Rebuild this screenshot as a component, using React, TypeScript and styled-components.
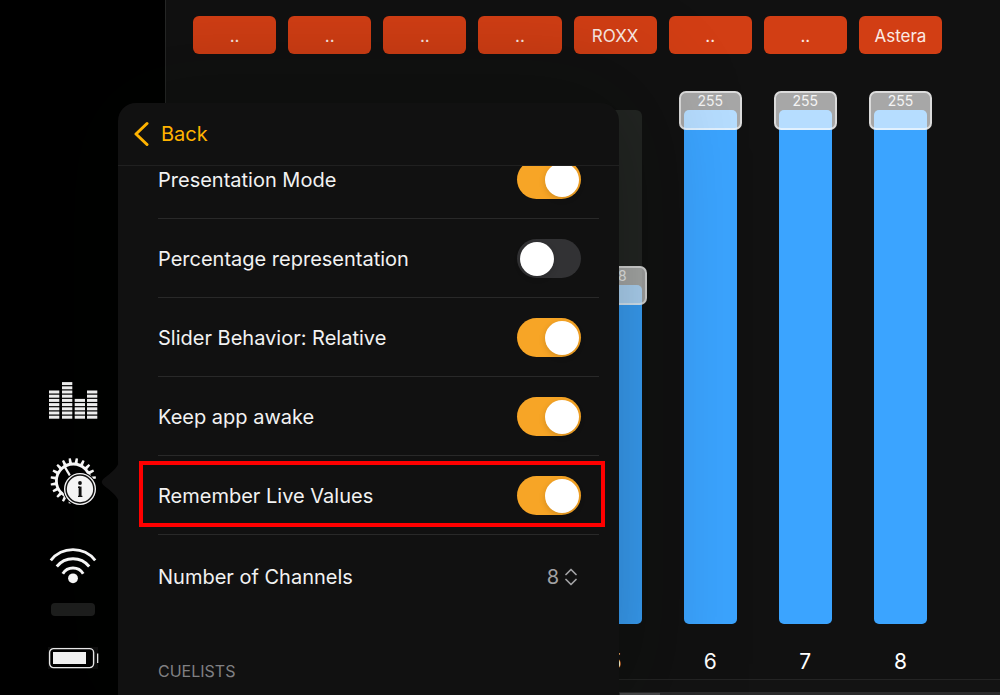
import React, { useState } from 'react';
import styled, { createGlobalStyle } from 'styled-components';

const GlobalStyle = createGlobalStyle`
  *, *::before, *::after { box-sizing: border-box; }
  body {
    margin: 0;
    background: #000;
    color: #f2f2f2;
    font-family: Inter, "Liberation Sans", sans-serif;
  }
  button { font: inherit; color: inherit; border: 0; cursor: pointer; }
`;

const Screen = styled.div`
  position: relative;
  display: flex;
  height: 100vh;
  overflow: hidden;
`;

const Sidebar = styled.nav`
  position: relative;
  z-index: 1;
  flex: 0 0 117px;
  display: flex;
  flex-direction: column;
  justify-content: flex-end;
  margin-right: 48px;
  padding: 0 0 26px 48px;
`;

const NavButton = styled.button<{ $space: number }>`
  width: 51px;
  padding: 0;
  margin-bottom: ${(p) => p.$space}px;
  background: none;
  line-height: 0;
`;

const StatusPill = styled.div`
  width: 44px;
  height: 13px;
  margin: 0 0 31px 3px;
  border-radius: 4px;
  background: #1c1d1c;
`;

const Console = styled.main`
  flex: 1;
  display: flex;
  flex-direction: column;
  min-width: 0;
  border-left: 1px solid #262726;
  background: #111;
`;

const Grid = styled.div`
  display: grid;
  grid-template-columns: repeat(8, 1fr);
  column-gap: 12px;
  padding: 0 58px 0 27px;
`;

const ButtonGrid = styled(Grid)`
  padding-top: 16px;
`;

const FaderGrid = styled(Grid)`
  flex: 1;
  padding-top: 56px;
`;

const CueButton = styled.button`
  height: 38px;
  padding: 1px 0 0;
  border-radius: 6px;
  background: #d23e14;
  color: #fbeae4;
  font-size: 17px;
  line-height: 36px;
`;

const Channel = styled.div`
  display: flex;
  flex-direction: column;
  align-items: center;
`;

const Track = styled.div`
  position: relative;
  flex: 1;
  width: 53px;
  border-radius: 6px;
  background: #242624;
`;

const Fill = styled.div`
  position: absolute;
  inset: auto 0 0;
  border-radius: 5px;
  background: #3ba4ff;
`;

const Thumb = styled.div`
  position: absolute;
  top: -19px;
  left: -5px;
  right: -5px;
  height: 39px;
  border: 2px solid rgba(255, 255, 255, 0.6);
  border-radius: 7px;
  background: rgba(255, 255, 255, 0.63);
  color: #f4f4f4;
  font-size: 14px;
  line-height: 16px;
  text-align: center;
`;

const ChannelName = styled.div`
  height: 55px;
  padding-top: 26px;
  color: #fff;
  font-size: 21px;
  line-height: 24px;
`;

const BottomBar = styled.div`
  height: 16px;
  padding-top: 12px;
  border-top: 1px solid #242424;
  background: #131313;
`;

const BottomStrip = styled.div`
  height: 3px;
  padding: 1px 0 0 454px;
  background: #2a2a2b;
`;

const BottomTab = styled.div`
  width: 40px;
  height: 2px;
  background: #4a4a4c;
`;

const Popover = styled.section`
  position: absolute;
  top: 103px;
  bottom: 0;
  left: 118px;
  display: flex;
  flex-direction: column;
  width: 501px;
  border-radius: 18px 18px 0 0;
  background: #111;
  box-shadow: 0 0 110px 20px rgba(0, 10, 0, 0.28);
`;

const Arrow = styled.svg`
  position: absolute;
  top: 358px;
  left: -17px;
`;

const PopoverHeader = styled.header`
  display: flex;
  flex: 0 0 63px;
  align-items: center;
  padding-left: 16px;
  border-bottom: 1px solid #202020;
`;

const BackButton = styled.button`
  display: flex;
  align-items: center;
  gap: 12px;
  padding: 0;
  background: none;
  color: #ffb300;
  font-size: 20px;
  line-height: 24px;
`;

const ScrollArea = styled.div`
  flex: 1;
  min-height: 0;
  overflow: hidden;
  padding: 0 20px 0 40px;
`;

const List = styled.div`
  margin-top: -26px;
`;

const Row = styled.div`
  position: relative;
  display: flex;
  align-items: center;
  justify-content: space-between;
  height: 79px;
  padding-right: 18px;
  border-bottom: 1px solid #292929;
  font-size: 20px;
  line-height: 24px;
`;

const PickerRow = styled(Row)`
  height: 83px;
  border-bottom: 0;
`;

const OptionLabel = styled.label`
  padding-top: 2px;
`;

const Highlight = styled.span`
  position: absolute;
  inset: 5px -6px 7px -19px;
  border: 4px solid #f00;
  pointer-events: none;
`;

const Switch = styled.input`
  appearance: none;
  width: 64px;
  height: 39px;
  margin: 0;
  padding: 3px 2px 2px 3px;
  border-radius: 20px;
  background: #323234;
  cursor: pointer;

  &::before {
    content: '';
    display: block;
    width: 34px;
    height: 34px;
    border-radius: 50%;
    background: #fff;
    box-shadow: 0 2px 6px rgba(0, 0, 0, 0.15);
  }

  &:checked { background: #f7a526; }
  &:checked::before { margin-left: auto; }
`;

const PickerButton = styled.button`
  display: flex;
  align-items: center;
  gap: 6px;
  padding: 0 4px 0 0;
  background: none;
  color: #a2a2a4;
  font-size: 20px;
  line-height: 24px;
`;

const SectionTitle = styled.h2`
  margin: 43px 0 0;
  color: #808083;
  font-size: 16px;
  font-weight: 400;
  line-height: 20px;
`;

const MixerIcon = () => {
  const bars = [
    { x: 1, n: 7 },
    { x: 14, n: 9 },
    { x: 26.7, n: 5 },
    { x: 39, n: 7 },
  ];
  return (
    <svg width="51" height="38" viewBox="0 0 51 38" aria-hidden="true">
      {bars.map((b) =>
        Array.from({ length: b.n }, (_, i) => (
          <rect key={`${b.x}-${i}`} x={b.x} y={34.7 - i * 4.2} width="10.3" height="3" fill="#ededed" />
        ))
      )}
    </svg>
  );
};

const GearIcon = () => (
  <svg width="51" height="50" viewBox="0 0 51 50" fill="none" aria-hidden="true">
    <circle cx="25.3" cy="23.9" r="16.9" stroke="#f6f6f6" strokeWidth="2.8" />
    {Array.from({ length: 20 }, (_, i) => (
      <path key={i} d="M23.700 6.800L24.200 1.100h2.200L26.900 6.800z" fill="#f6f6f6" transform={`rotate(${i * 18 + 9} 25.3 23.9)`} />
    ))}
    <path d="M16.500 9.500l7.500 12.500" stroke="#f6f6f6" strokeWidth="2.4" />
    <circle cx="32" cy="32" r="17" fill="#000" />
    <circle cx="32" cy="32" r="16" fill="#f4f4f4" />
    <circle cx="32" cy="32" r="13.9" stroke="#111" strokeWidth="1.5" />
    <circle cx="32" cy="26" r="1.9" fill="#111" />
    <path d="M30 30.300h2" stroke="#111" strokeWidth="1.400" />
    <path d="M30 39.400h4.400" stroke="#111" strokeWidth="1.200" />
    <path d="M32.100 29.600v10.400" stroke="#111" strokeWidth="2.900" />
  </svg>
);

const WifiIcon = () => (
  <svg width="51" height="38" viewBox="0 0 51 38" fill="none" stroke="#f5f5f5" strokeWidth="2.9" aria-hidden="true">
    <path d="M2.800 13.300A28.500 28.500 0 0 1 47.200 13.300" />
    <path d="M8.800 19.500A20.800 20.800 0 0 1 41.200 19.500" />
    <path d="M14.800 26.800A11.900 11.900 0 0 1 35.200 26.800" />
    <circle cx="25" cy="31.300" r="4.900" fill="#f5f5f5" stroke="none" />
  </svg>
);

const BatteryIcon = () => (
  <svg width="51" height="22" viewBox="0 0 51 22" aria-hidden="true">
    <rect x="0" y="0" width="50" height="22" fill="#0d0d0d" />
    <rect x="1.600" y="1.600" width="44" height="19" rx="4" fill="#000" stroke="#e6e6e6" strokeWidth="1.400" />
    <rect x="5" y="5" width="33" height="12" fill="#f0f0f0" />
    <rect x="49" y="6.500" width="1.300" height="9.500" fill="#e6e6e6" />
  </svg>
);

const cueNames = ['..', '..', '..', '..', 'ROXX', '..', '..', 'Astera'];

// Channels whose column lies fully under the popover carry no readout.
const channels = [
  { number: 1, covered: true, value: 0 },
  { number: 2, covered: true, value: 0 },
  { number: 3, covered: true, value: 0 },
  { number: 4, covered: true, value: 0 },
  { number: 5, value: 168 },
  { number: 6, value: 255 },
  { number: 7, value: 255 },
  { number: 8, value: 255 },
];

const options = [
  { label: 'Presentation Mode', on: true },
  { label: 'Percentage representation', on: false },
  { label: 'Slider Behavior: Relative', on: true },
  { label: 'Keep app awake', on: true },
  { label: 'Remember Live Values', on: true, marked: true },
];

function Option({ label, on, marked }: { label: string; on: boolean; marked?: boolean }) {
  const [checked, setChecked] = useState(on);
  const id = label.toLowerCase().replace(/\W+/g, '-');
  return (
    <Row>
      <OptionLabel htmlFor={id}>{label}</OptionLabel>
      <Switch id={id} type="checkbox" role="switch" checked={checked} onChange={() => setChecked(!checked)} />
      {marked && <Highlight />}
    </Row>
  );
}

export default function App() {
  return (
    <Screen>
      <GlobalStyle />
      <Sidebar>
        <NavButton $space={38} aria-label="Mixer"><MixerIcon /></NavButton>
        <NavButton $space={40} aria-label="Settings"><GearIcon /></NavButton>
        <NavButton $space={18} aria-label="Network"><WifiIcon /></NavButton>
        <StatusPill />
        <BatteryIcon />
      </Sidebar>

      <Console>
        <ButtonGrid>
          {cueNames.map((name, i) => <CueButton key={i}>{name}</CueButton>)}
        </ButtonGrid>
        <FaderGrid>
          {channels.map(({ number, value, covered }) => (
            <Channel key={number}>
              <Track>
                {!covered && (
                  <Fill style={{ height: `${(value / 255) * 100}%` }}>
                    <Thumb>{value}</Thumb>
                  </Fill>
                )}
              </Track>
              <ChannelName>{!covered && number}</ChannelName>
            </Channel>
          ))}
        </FaderGrid>
        <BottomBar>
          <BottomStrip><BottomTab /></BottomStrip>
        </BottomBar>
      </Console>

      <Popover>
        <Arrow width="18" height="42" viewBox="0 0 18 42" aria-hidden="true">
          <path d="M18 0C17 6 13 9 6 15C-1 20 -1 22 6 27C13 33 17 36 18 42z" fill="#111" />
        </Arrow>
        <PopoverHeader>
          <BackButton>
            <svg width="15" height="26" viewBox="0 0 15 26" fill="none" stroke="currentColor" strokeWidth="3" strokeLinecap="round" strokeLinejoin="round" aria-hidden="true">
              <path d="M13 2.500L2 13l11 10.500" />
            </svg>
            <span>Back</span>
          </BackButton>
        </PopoverHeader>
        <ScrollArea>
          <List>
            {options.map((o) => <Option key={o.label} {...o} />)}
            <PickerRow>
              <span>Number of Channels</span>
              <PickerButton aria-label="Number of Channels: 8">
                8
                <svg width="12" height="18" viewBox="0 0 12 18" fill="none" stroke="currentColor" strokeWidth="1.700" strokeLinecap="round" strokeLinejoin="round" aria-hidden="true">
                  <path d="M1 6.500l5-5 5 5M1 11.500l5 5 5-5" />
                </svg>
              </PickerButton>
            </PickerRow>
          </List>
          <SectionTitle>CUELISTS</SectionTitle>
        </ScrollArea>
      </Popover>
    </Screen>
  );
}
